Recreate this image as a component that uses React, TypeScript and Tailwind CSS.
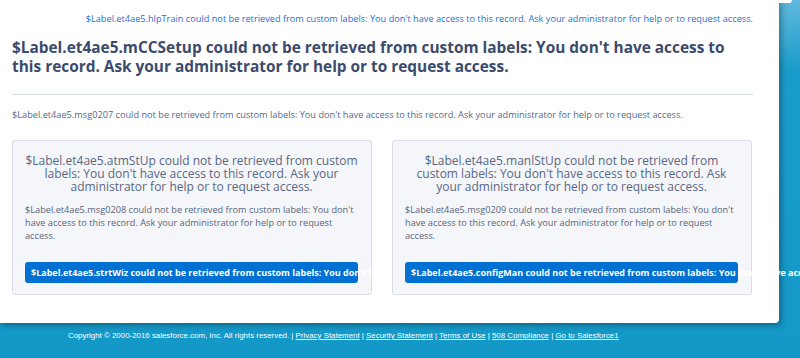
import React from 'react';

const MSG = "could not be retrieved from custom labels: You don't have access to this record. Ask your administrator for help or to request access.";

const CARDS = [
  { title: "$Label.et4ae5.atmStUp", body: "$Label.et4ae5.msg0208", btn: "$Label.et4ae5.strtWiz" },
  { title: "$Label.et4ae5.manlStUp", body: "$Label.et4ae5.msg0209", btn: "$Label.et4ae5.configMan" },
];

const FOOTER_LINKS = ["Privacy Statement", "Security Statement", "Terms of Use", "508 Compliance", "Go to Salesforce1"];

export default function App() {
  return (
    <div className="relative w-[800px] h-[358px] overflow-hidden bg-[linear-gradient(180deg,#5fb8dc_0px,#1a9ccb_70px,#1398c8_100%)] font-['Open_Sans',sans-serif]">
      {/* little tab peeking at top right */}
      <div className="absolute top-0 left-[779px] w-[13px] h-[3px] bg-white rounded-br-[3px]" />

      {/* Main panel */}
      <div className="w-[779px] h-[323px] bg-white rounded-br-[4px] shadow-[2px_2px_6px_rgba(0,0,0,0.35)] px-3 pt-[12px]">
        <div className="w-[741px]">
          <div className="text-right text-[9.2px] leading-[14px] text-[#1f6fce]">
            $Label.et4ae5.hlpTrain {MSG}
          </div>

          <h1 className="mt-[12px] text-[15.4px] leading-[19px] font-bold text-[#3b4b6c]">
            $Label.et4ae5.mCCSetup {MSG}
          </h1>

          <div className="mt-[18px] border-t border-[#d8dde6]" />

          <p className="mt-[13px] text-[9.2px] leading-[14px] text-[#54698d]">
            $Label.et4ae5.msg0207 {MSG}
          </p>

          <div className="mt-[18px] flex gap-5">
            {CARDS.map((c) => (
              <div key={c.title} className="w-[360px] h-[155px] bg-[#f4f6f9] border border-[#d8dde6] rounded-[3px] pl-3 pr-[13px] pt-[13px]">
                <div className="text-center text-[12px] leading-[13px] text-[#5a6783]">
                  {c.title} {MSG}
                </div>
                <p className="mt-[10px] text-[9.2px] leading-[13px] text-[#5b6479]">
                  {c.body} {MSG}
                </p>
                <div className="mt-[20px] h-[21px] bg-[#0070d2] rounded-[3px] px-[6px] flex items-center text-white text-[9px] font-bold whitespace-nowrap">
                  {c.btn} {MSG}
                </div>
              </div>
            ))}
          </div>
        </div>
      </div>

      {/* Footer */}
      <div className="pl-[68px] pt-[8px] text-white text-[7.9px] leading-[10px] font-['Liberation_Sans',sans-serif]">
        Copyright © 2000-2016 salesforce.com, Inc. All rights reserved.
        {FOOTER_LINKS.map((l) => (
          <span key={l}>
            {' | '}
            <span className="underline">{l}</span>
          </span>
        ))}
      </div>
    </div>
  );
}
